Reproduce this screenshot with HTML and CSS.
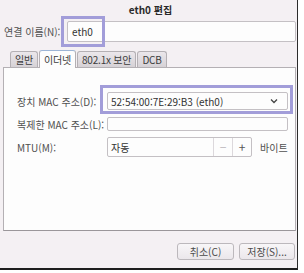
FILE: index.html
```html
<!DOCTYPE html>
<html lang="ko">
<head>
    <meta charset="UTF-8">
    <title>eth0 편집</title>
    <link rel="stylesheet" href="styles.css">
</head>
<body>
    <div class="window">
        <div class="title">eth0 편집</div>

        <div class="name-row">
            <label class="name-label">연결 이름(N):</label>
            <div class="entry name-entry">
                eth0
                <span class="focus-ring ring-name"></span>
            </div>
        </div>

        <div class="notebook">
            <div class="tabs">
                <div class="tab">일반</div>
                <div class="tab active">이더넷</div>
                <div class="tab">802.1x 보안</div>
                <div class="tab">DCB</div>
            </div>
            <div class="panel">
                <div class="row row-mac">
                    <span class="row-label">장치 MAC 주소(D):</span>
                    <div class="combo">
                        <span>52:54:00:7E:29:B3 (eth0)</span>
                        <svg class="chevron" width="8" height="6" viewBox="0 0 8 6">
                            <polyline points="1,1.5 4,4.5 7,1.5" fill="none" stroke="#444" stroke-width="1.3"/>
                        </svg>
                        <span class="focus-ring ring-mac"></span>
                    </div>
                </div>
                <div class="row row-clone">
                    <span class="row-label">복제한 MAC 주소(L):</span>
                    <div class="entry clone-entry"></div>
                </div>
                <div class="row row-mtu">
                    <span class="row-label">MTU(M):</span>
                    <div class="spin">
                        <span class="spin-text">자동</span>
                        <span class="spin-btn minus">−</span>
                        <span class="spin-btn plus">+</span>
                    </div>
                    <span class="unit">바이트</span>
                </div>
            </div>
        </div>

        <div class="buttons">
            <button class="btn cancel">취소(C)</button>
            <button class="btn save">저장(S)...</button>
        </div>
    </div>
</body>
</html>
```

FILE: styles.css
```css
body {
    margin: 0;
    background: #ffffff;
    font-family: "Noto Sans CJK KR", "Noto Sans", sans-serif;
    font-size: 10px;
    color: #505050;
}

.window {
    box-sizing: border-box;
    width: 298px;
    height: 270px;
    padding: 0 1px 0 3px;
    background-color: #f4f0f3;
    border-right: 1px solid #2b2b2b;
    border-bottom: 2px solid #1e1e1e;
    display: flex;
    flex-direction: column;
}

.title {
    height: 19px;
    line-height: 19px;
    padding-left: 2px;
    text-align: center;
    font-weight: bold;
    color: #2a2a2a;
}

.name-row {
    display: flex;
    align-items: center;
    margin-top: 2px;
    height: 21px;
}

.name-label {
    flex: 0 0 64px;
    padding-left: 1px;
    box-sizing: border-box;
}

.entry {
    position: relative;
    box-sizing: border-box;
    background: #fdfdfd;
    border: 1px solid #c4c0c4;
    border-radius: 2px;
    color: #333;
}

.name-entry {
    flex: 1;
    height: 21px;
    line-height: 19px;
    padding-left: 4px;
}

.focus-ring {
    position: absolute;
    border: 3px solid #a29dd9;
    box-sizing: border-box;
}

.ring-name {
    left: -7px;
    top: -6px;
    width: 44px;
    height: 31px;
}

.notebook {
    margin-top: 8px;
}

.tabs {
    display: flex;
    align-items: flex-end;
    gap: 1px;
    padding-left: 7px;
    height: 17px;
}

.tab {
    box-sizing: border-box;
    height: 16px;
    line-height: 15px;
    padding: 0 4px;
    border: 1px solid #b4b0b4;
    border-bottom: none;
    border-radius: 3px 3px 0 0;
    background: linear-gradient(#ebe7eb, #d6d2d6);
    color: #3c3c3c;
    letter-spacing: -0.2px;
}

.tab.active {
    height: 18px;
    line-height: 17px;
    margin-bottom: -1px;
    background: #fdfdfd;
    border-color: #9db5d6 #b4b0b4 #b4b0b4;
    position: relative;
}

.panel {
    box-sizing: border-box;
    height: 164px;
    background: #fdfdfd;
    border: 1px solid #b4b0b4;
    border-bottom-color: #9a969a;
    padding: 0 7px 0 13px;
}

.row {
    display: flex;
    align-items: center;
}

.row-label {
    flex: 0 0 90px;
}

.row-mac {
    margin-top: 24px;
    height: 18px;
}

.combo {
    position: relative;
    flex: 1;
    height: 18px;
    box-sizing: border-box;
    border: 1px solid #c4c0c4;
    border-radius: 2px;
    background: #fdfdfd;
    display: flex;
    align-items: center;
    justify-content: space-between;
    padding: 0 9px 0 3px;
    color: #333;
}

.ring-mac {
    left: -8px;
    top: -8px;
    width: 193px;
    height: 29px;
}

.row-clone {
    margin-top: 7px;
    height: 14px;
}

.clone-entry {
    flex: 1;
    height: 14px;
}

.row-mtu {
    margin-top: 6px;
    height: 20px;
}

.spin {
    flex: 0 0 145px;
    height: 20px;
    box-sizing: border-box;
    border: 1px solid #c4c0c4;
    border-radius: 2px;
    background: #fdfdfd;
    display: flex;
    align-items: center;
    color: #333;
}

.spin-text {
    flex: 1;
    padding-left: 3px;
}

.spin-btn {
    width: 18px;
    height: 18px;
    line-height: 18px;
    text-align: center;
    font-size: 12px;
    border-left: 1px solid #dcd8dc;
}

.spin-btn.minus {
    color: #bdb9bd;
}

.spin-btn.plus {
    color: #555;
}

.unit {
    margin-left: 8px;
}

.buttons {
    display: flex;
    justify-content: flex-end;
    gap: 5px;
    margin-top: 12px;
    padding-right: 1px;
}

.btn {
    box-sizing: border-box;
    height: 17px;
    padding: 0;
    font-family: inherit;
    font-size: 10px;
    color: #4a4a4a;
    background: linear-gradient(#f8f6f8, #ebe7eb);
    border: 1px solid #bcb8bc;
    border-radius: 3px;
}

.cancel {
    width: 57px;
}

.save {
    width: 56px;
}
```
